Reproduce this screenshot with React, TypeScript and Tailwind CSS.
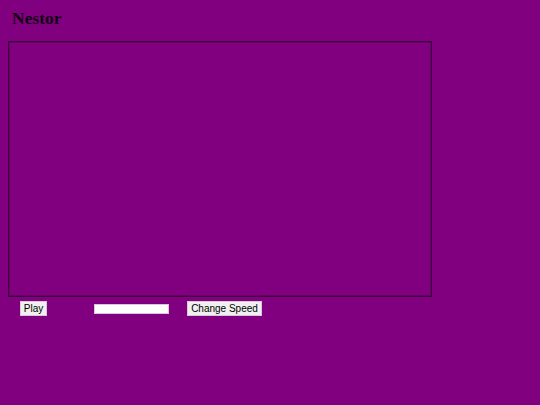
export default function App() {
  return (
    <div className="min-h-[405px] w-full bg-[#800080] pt-[9px] font-['Liberation_Sans',sans-serif]">
      <h1 className="ml-[12px] font-['Liberation_Serif',serif] text-[17.5px] font-bold leading-[19px] text-[#140014]">
        Nestor
      </h1>
      <div className="ml-[8px] mt-[13px] h-[256px] w-[424px] border border-[#3a003a] shadow-[inset_0_0_0_1px_rgba(60,0,60,0.35)]" />
      <div className="mt-[4px] flex items-center">
        <button className="ml-[20px] h-[15px] w-[27px] whitespace-nowrap border border-[#d8c8d8] bg-[#f0f0f0] p-0 text-[10px] leading-[13px] text-black">
          Play
        </button>
        <input className="ml-[47px] mt-[1px] h-[10px] w-[75px] border border-[#d8c8d8] bg-white" />
        <button className="ml-[18px] h-[15px] w-[75px] whitespace-nowrap border border-[#d8c8d8] bg-[#f0f0f0] p-0 text-[10px] leading-[13px] text-black">
          Change Speed
        </button>
      </div>
    </div>
  );
}
